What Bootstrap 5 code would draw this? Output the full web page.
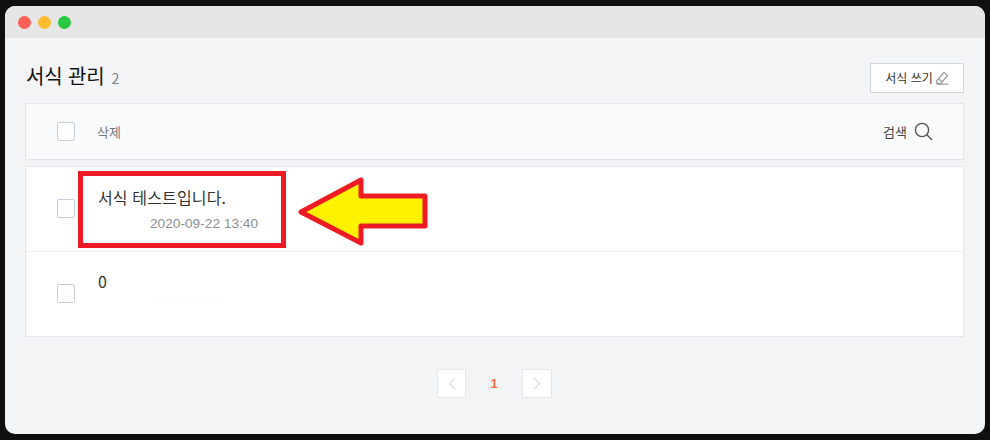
<!DOCTYPE html>
<html lang="ko">
<head>
    <meta charset="UTF-8">
    <title>서식 관리</title>
    <link href="https://cdn.jsdelivr.net/npm/bootstrap@5.3.1/dist/css/bootstrap.min.css" rel="stylesheet">
    <style>
        html, body { height: 440px; overflow: hidden; }
        body {
            background: #0f0f0f;
            padding: 6px 5px;
            font-family: "Noto Sans CJK KR", "Liberation Sans", sans-serif;
        }
        .app-window {
            position: relative;
            height: 428px;
            background: #f3f4f6;
            border-radius: 10px;
            overflow: hidden;
        }
        .title-strip { height: 32px; background: #e6e6e6; padding-left: 13px; gap: 7px; }
        .dot { width: 13px; height: 13px; border-radius: 50%; }
        .dot-red { background: #ff5f57; }
        .dot-amber { background: #febc2e; }
        .dot-green { background: #28c840; }
        .page-body { padding: 0 21px 0 20px; }
        .head-row { height: 65px; padding-top: 24px; }
        .page-title { font-size: 20px; line-height: 28px; color: #111; margin: 0 0 0 1px; letter-spacing: -.15px; }
        .page-count { font-size: 14px; color: #7d8590; margin-left: 7px; letter-spacing: 0; }
        .write-btn {
            width: 94px; height: 30px; padding: 0; margin-top: 1px;
            background: #fff; border: 1px solid #cfd6df; border-radius: 0;
            font-size: 12px; color: #333; gap: 2px;
        }
        .tool-row {
            height: 57px; background: #f9fafc;
            border: 1px solid #e3e6ec;
            padding: 0 30px 0 31px;
        }
        .check-box {
            flex: none; width: 18px; height: 19px; background: #fff;
            border: 1px solid #c6ced9; border-radius: 2px;
        }
        .del-label { font-size: 13px; color: #77787c; margin-left: 22px; }
        .search-label { font-size: 13px; color: #444; margin-right: 7px; }
        .list-box { margin-top: 6px; background: #fff; border: 1px solid #e3e6ec; }
        .list-row { height: 84px; padding-left: 31px; }
        .list-row + .list-row { border-top: 1px solid #f0f1f4; height: 85px; }
        .list-row .check-box { margin-top: -2px; }
        .row-text { margin-left: 23px; }
        .row-title { font-size: 16px; line-height: 22px; color: #333; letter-spacing: .15px; }
        .row-date {
            font-family: "Liberation Sans", sans-serif;
            font-size: 13.7px; line-height: 18px; color: #8f8f8f;
            margin: 7px 0 0 52px;
        }
        .row-num { position: relative; font-size: 16px; line-height: 22px; color: #333; margin-top: -24px; }
        .row-num::after {
            content: ""; position: absolute; left: 56px; top: 30px;
            width: 70px; height: 1px;
            background: repeating-linear-gradient(90deg, #ececec 0 1px, transparent 1px 8px);
        }
        .pager { margin-top: 32px; }
        .page-arrow {
            width: 29px; height: 29px; background: #fff;
            border: 1px solid #e3e6ec;
        }
        .page-arrow:last-child { width: 30px; }
        .page-cur {
            width: 56px; text-align: center; font-size: 13px; font-weight: 700;
            color: #ff6a3d; font-family: "Liberation Sans", sans-serif;
        }
        .mark-box {
            position: absolute; left: 73px; top: 165px;
            width: 208px; height: 77px; border: 5px solid #ed1c24;
        }
        .mark-arrow { position: absolute; left: 293px; top: 170px; }
    </style>
</head>
<body>
    <div class="app-window">
        <div class="title-strip d-flex align-items-center">
            <span class="dot dot-red"></span>
            <span class="dot dot-amber"></span>
            <span class="dot dot-green"></span>
        </div>

        <div class="page-body">
            <div class="head-row d-flex justify-content-between align-items-start">
                <h1 class="page-title fw-normal">서식 관리<span class="page-count">2</span></h1>
                <button class="write-btn btn d-flex align-items-center justify-content-center">
                    서식 쓰기
                    <svg width="14" height="14" viewBox="0 0 14 14" fill="none" stroke="#a0a0a0" stroke-width="1.3">
                        <path d="M1.5 10 9 1.5l3.5 3-6.8 8H2z"/>
                        <path d="M1.5 13.2H13.5M3.5 8l3.2 2.6"/>
                    </svg>
                </button>
            </div>

            <div class="tool-row d-flex align-items-center">
                <span class="check-box"></span>
                <span class="del-label">삭제</span>
                <span class="search-label ms-auto">검색</span>
                <svg width="19" height="19" viewBox="0 0 19 19" fill="none" stroke="#555" stroke-width="1.4">
                    <circle cx="8" cy="8" r="6.6"/>
                    <path d="M12.8 12.8 18 18"/>
                </svg>
            </div>

            <div class="list-box">
                <div class="list-row d-flex align-items-center">
                    <span class="check-box"></span>
                    <div class="row-text">
                        <div class="row-title">서식 테스트입니다.</div>
                        <div class="row-date">2020-09-22 13:40</div>
                    </div>
                </div>
                <div class="list-row d-flex align-items-center">
                    <span class="check-box"></span>
                    <div class="row-text">
                        <div class="row-num">0</div>
                    </div>
                </div>
            </div>

            <div class="pager d-flex justify-content-center align-items-center">
                <span class="page-arrow d-flex align-items-center justify-content-center">
                    <svg width="8" height="13" viewBox="0 0 8 13" fill="none" stroke="#dfe2e8" stroke-width="1.5"><path d="M7 1 1.5 6.5 7 12"/></svg>
                </span>
                <span class="page-cur">1</span>
                <span class="page-arrow d-flex align-items-center justify-content-center">
                    <svg width="8" height="13" viewBox="0 0 8 13" fill="none" stroke="#dfe2e8" stroke-width="1.5"><path d="M1 1l5.5 5.5L1 12"/></svg>
                </span>
            </div>
        </div>

        <div class="mark-box"></div>
        <svg class="mark-arrow" width="136" height="76" viewBox="0 0 136 76">
            <path d="M3 36 63 4V20H127V50H63V67Z" fill="#fff200" stroke="#ed1c24" stroke-width="5" stroke-linejoin="round"/>
        </svg>
    </div>

    <script src="https://cdn.jsdelivr.net/npm/bootstrap@5.3.1/dist/js/bootstrap.bundle.min.js"></script>
</body>
</html>
